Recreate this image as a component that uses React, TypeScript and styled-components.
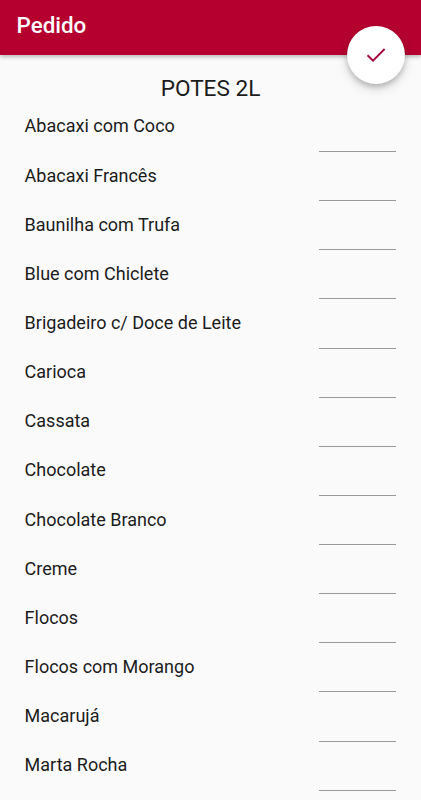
import React from "react";
import styled, { createGlobalStyle } from "styled-components";

const GlobalStyle = createGlobalStyle`
  * { box-sizing: border-box; }
  body { margin: 0; background: #fafafa; font-family: Roboto, sans-serif; color: #1c1c1c; overflow: hidden; }
`;
const Screen = styled.div`
  height: 800px;
  overflow: hidden;
  background: #fafafa;
`;
const AppBar = styled.header`
  position: relative;
  height: 55px;
  padding: 0 16.5px;
  background: #b5002f;
  box-shadow: 0 2px 4px rgba(0, 0, 0, 0.26);
`;
const BarTitle = styled.h1`
  margin: 0;
  font-size: 22.4px;
  font-weight: 500;
  line-height: 51px;
  color: #fff;
`;
const ConfirmButton = styled.button`
  position: absolute;
  top: 26px;
  right: 16px;
  width: 58px;
  height: 58px;
  padding: 0 0 1px;
  border: 0;
  border-radius: 50%;
  display: grid;
  place-items: center;
  background: #fff;
  color: #a3093a;
  box-shadow: 0 3px 5px rgba(0, 0, 0, 0.18), 0 5px 12px rgba(0, 0, 0, 0.14);
`;
const Form = styled.main`
  padding: 19.8px 24.6px 0;
`;
const SectionTitle = styled.h2`
  margin: 0;
  text-align: center;
  font-size: 22.6px;
  font-weight: 400;
  line-height: 28px;
`;
const Row = styled.label`
  display: flex;
  justify-content: space-between;
  height: 49.15px;
`;
const FlavorName = styled.span`
  padding-top: 0.6px;
  font-size: 18px;
  line-height: 46px;
`;
const Quantity = styled.input`
  width: 77px;
  height: 49.15px;
  padding: 0;
  border: 0;
  border-bottom: 1px solid #999;
  background: transparent;
  outline: none;
`;

const flavors = [
  "Abacaxi com Coco", "Abacaxi Francês", "Baunilha com Trufa", "Blue com Chiclete",
  "Brigadeiro c/ Doce de Leite", "Carioca", "Cassata", "Chocolate", "Chocolate Branco",
  "Creme", "Flocos", "Flocos com Morango", "Macarujá", "Marta Rocha",
];

export default function App() {
  return (
    <Screen>
      <GlobalStyle />
      <AppBar>
        <BarTitle>Pedido</BarTitle>
        <ConfirmButton aria-label="Confirmar">
          <svg width="24" height="24" viewBox="0 0 24 24" fill="none" stroke="currentColor" strokeWidth="1.9">
            <path d="M3.5 12.2 9 17.6 20.6 6" />
          </svg>
        </ConfirmButton>
      </AppBar>
      <Form>
        <SectionTitle>POTES 2L</SectionTitle>
        {flavors.map((name) => (
          <Row key={name}>
            <FlavorName>{name}</FlavorName>
            <Quantity />
          </Row>
        ))}
      </Form>
    </Screen>
  );
}
